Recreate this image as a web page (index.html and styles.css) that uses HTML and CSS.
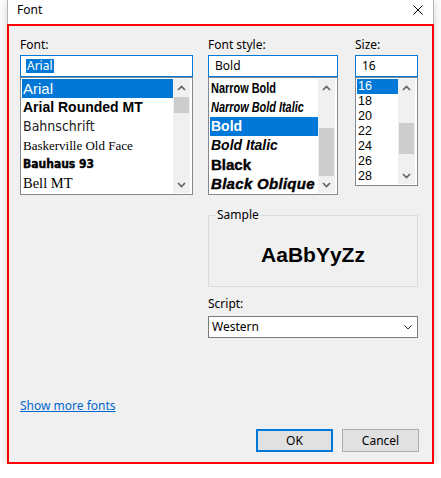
FILE: index.html
```html
<!DOCTYPE html>
<html lang="en">
<head>
<meta charset="utf-8">
<title>Font</title>
<link rel="stylesheet" href="styles.css">
</head>
<body>
<div class="window">
  <div class="titlebar">
    <span class="title">Font</span>
    <svg class="close" width="10" height="10" viewBox="0 0 10 10"><path d="M0.5 0.5 L9.5 9.5 M9.5 0.5 L0.5 9.5" stroke="#000" stroke-width="1" fill="none"/></svg>
  </div>
  <div class="client">
    <div class="pickers">
      <div class="col col-font">
        <label class="lbl">Font:</label>
        <div class="edit"><span class="edit-sel">Arial</span></div>
        <div class="list">
          <ul class="items rows19">
            <li class="sel f-arial">Arial</li>
            <li class="f-rounded">Arial Rounded MT</li>
            <li class="f-bahn">Bahnschrift</li>
            <li class="f-bask">Baskerville Old Face</li>
            <li class="f-bauhaus">Bauhaus 93</li>
            <li class="f-bell">Bell MT</li>
          </ul>
          <div class="sbar">
            <div class="sbtn"><svg width="9" height="6" viewBox="0 0 9 6"><polyline points="1,5 4.5,1.5 8,5" fill="none" stroke="#606060" stroke-width="1.6"/></svg></div>
            <div class="track"><div class="thumb" style="margin-top:1px;height:16px"></div></div>
            <div class="sbtn"><svg width="9" height="6" viewBox="0 0 9 6"><polyline points="1,1 4.5,4.5 8,1" fill="none" stroke="#606060" stroke-width="1.6"/></svg></div>
          </div>
        </div>
      </div>
      <div class="col col-style">
        <label class="lbl">Font style:</label>
        <div class="edit"><span class="edit-text">Bold</span></div>
        <div class="list">
          <ul class="items rows19">
            <li><span class="s-narrow">Narrow Bold</span></li>
            <li><span class="s-narrow s-italic">Narrow Bold Italic</span></li>
            <li class="sel s-bold">Bold</li>
            <li class="s-bolditalic">Bold Italic</li>
            <li class="s-black">Black</li>
            <li class="s-blackobl">Black Oblique</li>
          </ul>
          <div class="sbar">
            <div class="sbtn"><svg width="9" height="6" viewBox="0 0 9 6"><polyline points="1,5 4.5,1.5 8,5" fill="none" stroke="#606060" stroke-width="1.6"/></svg></div>
            <div class="track"><div class="thumb" style="margin-top:32px;height:48px"></div></div>
            <div class="sbtn"><svg width="9" height="6" viewBox="0 0 9 6"><polyline points="1,1 4.5,4.5 8,1" fill="none" stroke="#606060" stroke-width="1.6"/></svg></div>
          </div>
        </div>
      </div>
      <div class="col col-size">
        <label class="lbl">Size:</label>
        <div class="edit"><span class="edit-text">16</span></div>
        <div class="list">
          <ul class="items rows15">
            <li class="sel">16</li>
            <li>18</li>
            <li>20</li>
            <li>22</li>
            <li>24</li>
            <li>26</li>
            <li>28</li>
          </ul>
          <div class="sbar">
            <div class="sbtn"><svg width="9" height="6" viewBox="0 0 9 6"><polyline points="1,5 4.5,1.5 8,5" fill="none" stroke="#606060" stroke-width="1.6"/></svg></div>
            <div class="track"><div class="thumb" style="margin-top:27px;height:31px"></div></div>
            <div class="sbtn"><svg width="9" height="6" viewBox="0 0 9 6"><polyline points="1,1 4.5,4.5 8,1" fill="none" stroke="#606060" stroke-width="1.6"/></svg></div>
          </div>
        </div>
      </div>
      <div class="lower">
        <fieldset class="sample">
          <legend>Sample</legend>
          <div class="sample-text">AaBbYyZz</div>
        </fieldset>
        <label class="lbl lbl-script">Script:</label>
        <div class="combo">
          <span>Western</span>
          <svg width="8" height="5" viewBox="0 0 8 5"><polyline points="0.5,0.5 4,4 7.5,0.5" fill="none" stroke="#333" stroke-width="1"/></svg>
        </div>
      </div>
    </div>
    <a class="more" href="#">Show more fonts</a>
    <div class="buttons">
      <button class="btn btn-default">OK</button>
      <button class="btn">Cancel</button>
    </div>
  </div>
</div>
</body>
</html>
```

FILE: styles.css
```css
* { box-sizing: border-box; }

html, body {
  margin: 0;
  padding: 0;
  background: #ffffff;
}

body {
  font-family: "Noto Sans", "Open Sans", sans-serif;
  font-size: 12px;
  line-height: 16px;
  color: #000;
}

.window {
  margin-left: 7px;
  width: 427px;
  box-shadow: 0 2px 10px rgba(0, 0, 0, 0.18);
}

.titlebar {
  height: 24px;
  background: #fff;
  display: flex;
  align-items: flex-start;
  padding: 2px 0 0 9px;
  border-left: 1px solid #b4b4b4;
  border-right: 1px solid #b4b4b4;
}

.title {
  font-size: 12px;
  line-height: 16px;
}

.close {
  margin-left: auto;
  margin-right: 10px;
  margin-top: 3px;
}

.client {
  height: 440px;
  background: #f0f0f0;
  border: 2px solid #ff0000;
  padding: 11px 13px 10px 11px;
  display: flex;
  flex-direction: column;
}

.pickers {
  display: grid;
  grid-template-columns: 173px 130px 65px;
  column-gap: 15px;
  align-items: start;
}

.col-size {
  padding-left: 2px;
}

.lbl {
  display: block;
  line-height: 16px;
  margin-bottom: 2px;
}

.edit {
  height: 22px;
  background: #fff;
  border: 1px solid #0078d7;
  padding: 0 5px;
  display: flex;
  align-items: center;
}

.edit-sel {
  display: inline-block;
  line-height: 14px;
  background: #0078d7;
  color: #fff;
  padding: 0 1px;
}

.edit-text {
  line-height: 16px;
  padding-left: 1px;
}

.list {
  display: flex;
  background: #fff;
  border: 1px solid #828790;
  padding: 1px 2px 1px 1px;
}

.items {
  list-style: none;
  margin: 0;
  padding: 0;
  flex: 1;
  min-width: 0;
}

.items li {
  white-space: nowrap;
  overflow: hidden;
  padding-left: 1px;
  color: #000;
}

.rows19 li {
  height: 19px;
  line-height: 19px;
}

.rows15 li {
  height: 15px;
  line-height: 15px;
  font-family: "Liberation Sans", Arial, sans-serif;
  font-size: 12.5px;
}

.items li.sel {
  background: #0078d7;
  color: #fff;
}

.sbar {
  width: 17px;
  flex: none;
  background: #f0f0f0;
  display: flex;
  flex-direction: column;
}

.sbtn {
  height: 17px;
  flex: none;
  display: flex;
  align-items: center;
  justify-content: center;
}

.track {
  flex: 1;
  padding: 0 1px;
}

.thumb {
  background: #cdcdcd;
}

/* font face previews */
.f-arial { font-family: "Liberation Sans", Arial, sans-serif; font-size: 15px; }
.f-rounded { font-family: "Liberation Sans", Arial, sans-serif; font-size: 14px; font-weight: bold; }
.f-bahn { font-family: "DejaVu Sans Condensed", "DejaVu Sans", sans-serif; font-stretch: condensed; font-size: 14px; color: #222 !important; }
.f-bask { font-family: "Liberation Serif", "Times New Roman", serif; font-size: 13px; }
.f-bauhaus { font-family: "DejaVu Sans Condensed", "DejaVu Sans", sans-serif; font-stretch: condensed; font-weight: bold; font-size: 12px; -webkit-text-stroke: 0.4px #000; }
.f-bell { font-family: "Liberation Serif", "Times New Roman", serif; font-size: 14.5px; }

/* style previews */
.s-narrow {
  display: inline-block;
  font-family: "Liberation Sans", Arial, sans-serif;
  font-weight: bold;
  font-size: 14px;
  transform: scaleX(0.78);
  transform-origin: left center;
}
.s-italic { font-style: italic; }
.s-bold { font-family: "Liberation Sans", Arial, sans-serif; font-weight: bold; font-size: 14px; }
.s-bolditalic { font-family: "Liberation Sans", Arial, sans-serif; font-weight: bold; font-style: italic; font-size: 14px; }
.s-black { font-family: "Liberation Sans", Arial, sans-serif; font-weight: 900; font-size: 15px; -webkit-text-stroke: 0.4px #000; }
.s-blackobl { font-family: "Liberation Sans", Arial, sans-serif; font-weight: 900; font-style: italic; font-size: 15px; letter-spacing: 0.3px; -webkit-text-stroke: 0.4px #000; }

.lower {
  grid-column: 2 / 4;
  margin-top: 12px;
}

.sample {
  margin: 0;
  padding: 0;
  min-width: 0;
  border: 1px solid #dcdcdc;
}

.sample legend {
  margin-left: 6px;
  padding: 0 2px;
  line-height: 16px;
}

.sample-text {
  height: 63px;
  display: flex;
  align-items: center;
  justify-content: center;
  font-family: "Liberation Sans", Arial, sans-serif;
  font-weight: bold;
  font-size: 21px;
}

.lbl-script {
  margin-top: 9px;
  margin-bottom: 4px;
}

.combo {
  height: 22px;
  background: #fff;
  border: 1px solid #7a7a7a;
  padding: 0 5px 0 3px;
  display: flex;
  align-items: center;
  justify-content: space-between;
}

.more {
  margin-top: auto;
  align-self: flex-start;
  color: #0066cc;
  text-decoration: underline;
  line-height: 16px;
}

.buttons {
  margin-top: 15px;
  display: flex;
  justify-content: flex-end;
  gap: 9px;
}

.btn {
  width: 77px;
  height: 23px;
  background: #e1e1e1;
  border: 1px solid #adadad;
  font-family: "Noto Sans", "Open Sans", sans-serif;
  font-size: 12px;
  color: #000;
  padding: 0;
}

.btn-default {
  border: 2px solid #0078d7;
}
```
